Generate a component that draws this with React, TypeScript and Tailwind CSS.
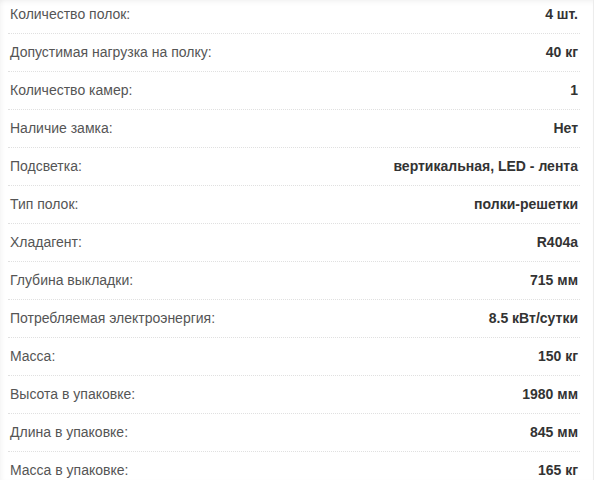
const specs: [string, string][] = [
  ["Количество полок:", "4 шт."],
  ["Допустимая нагрузка на полку:", "40 кг"],
  ["Количество камер:", "1"],
  ["Наличие замка:", "Нет"],
  ["Подсветка:", "вертикальная, LED - лента"],
  ["Тип полок:", "полки-решетки"],
  ["Хладагент:", "R404a"],
  ["Глубина выкладки:", "715 мм"],
  ["Потребляемая электроэнергия:", "8.5 кВт/сутки"],
  ["Масса:", "150 кг"],
  ["Высота в упаковке:", "1980 мм"],
  ["Длина в упаковке:", "845 мм"],
  ["Масса в упаковке:", "165 кг"],
];

const SpecRow = ({ label, value }: { label: string; value: string }) => (
  <div className="flex items-center justify-between h-[38px] ml-2 mr-[13px] px-[2px] border-b border-dotted border-[#e0e0e0]">
    <span className="text-[#555555]">{label}</span>
    <span className="font-bold text-[#333333]">{value}</span>
  </div>
);

export default function App() {
  return (
    <div className="h-[480px] w-[601px] overflow-hidden bg-white font-['Liberation_Sans',Arial,sans-serif] text-[14px]">
      <div className="w-[594px] h-full border-r border-[#ececec] shadow-[inset_0_5px_5px_-3px_rgba(0,0,0,0.05),inset_4px_0_4px_-2px_rgba(0,0,0,0.04)] overflow-hidden">
        <div className="-mt-1">
          {specs.map(([label, value]) => (
            <SpecRow key={label} label={label} value={value} />
          ))}
        </div>
      </div>
    </div>
  );
}
